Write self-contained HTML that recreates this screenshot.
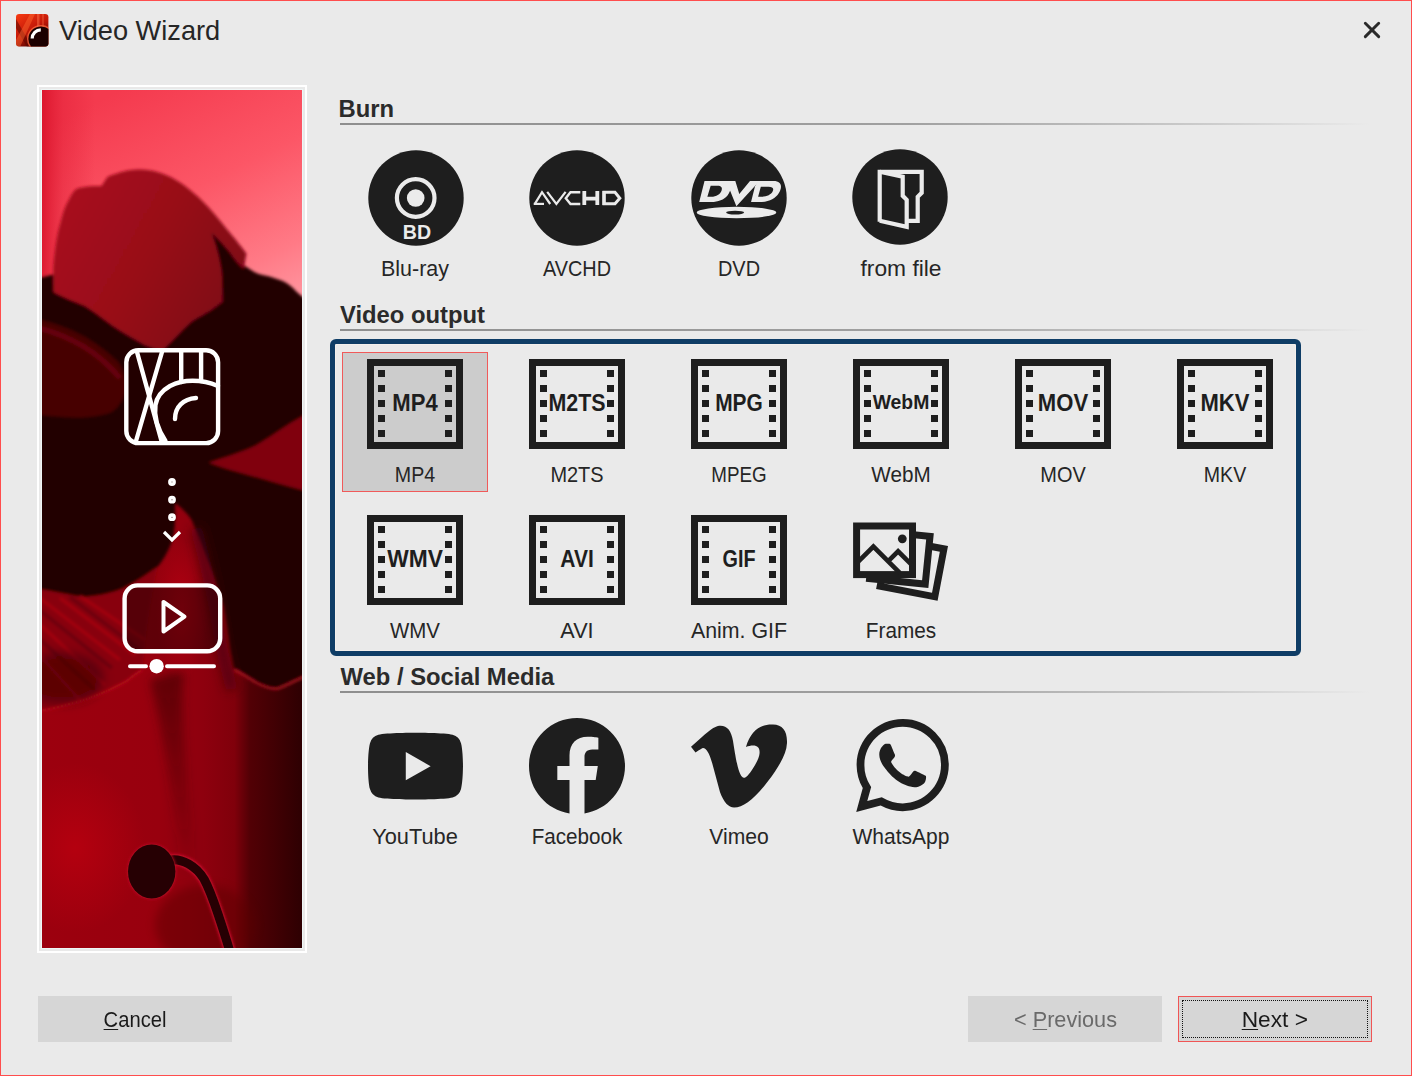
<!DOCTYPE html>
<html><head><meta charset="utf-8">
<style>
*{margin:0;padding:0;box-sizing:border-box}
html,body{width:1412px;height:1076px;overflow:hidden;background:#eaeaea}
body{position:relative;font-family:"Liberation Sans",sans-serif;color:#262626}
.abs{position:absolute}
.win{position:absolute;left:0;top:0;width:1412px;height:1076px;border:1px solid #ff4d4d}
.title{position:absolute;left:59px;top:13.5px;font-size:27.2px;line-height:34px;color:#262626;white-space:nowrap}
.hdr{position:absolute;left:340px;font-weight:bold;font-size:23.8px;line-height:28px;color:#2b2b2b;white-space:nowrap}
.sep{position:absolute;left:340px;width:1030px;height:2px;background:linear-gradient(90deg,#8e8e8e 0%,#a0a0a0 55%,#cdcdcd 85%,#eaeaea 100%)}
.lbl{position:absolute;text-align:center;font-size:22.5px;line-height:26px;color:#262626;white-space:nowrap;transform:translateX(-50%)}
.btn{position:absolute;height:46px;background:#d6d6d6;font-size:22.5px;line-height:46px;text-align:center;color:#1a1a1a;white-space:nowrap}
.u{text-decoration:underline;text-underline-offset:1.5px;text-decoration-thickness:1px}
.bt{display:inline-block;position:relative;top:0.8px}
.ft{font-family:"Liberation Sans",sans-serif;font-weight:bold;fill:#1e1e1e}
</style></head><body>
<div class="win"></div>
<svg class="abs" style="left:16px;top:14px" width="33" height="33" viewBox="0 0 33 33">
<defs><linearGradient id="tg" x1="0" y1="0" x2="0.6" y2="1"><stop offset="0" stop-color="#f83a12"/><stop offset="0.55" stop-color="#c21808"/><stop offset="1" stop-color="#4a0200"/></linearGradient>
<clipPath id="tc"><rect x="0" y="0" width="32.4" height="32.4" rx="3.2"/></clipPath></defs>
<g clip-path="url(#tc)"><rect x="0" y="0" width="33" height="33" fill="url(#tg)"/>
<path d="M0,5 L16,33 L11,33 L0,14Z" fill="#5a0500" opacity="0.55"/>
<path d="M14,0 L19,0 L4,33 L0,33 L0,26Z" fill="#ff6a30" opacity="0.45"/>
<rect x="21" y="0" width="2.5" height="16" fill="#ff7a50" opacity="0.45"/>
<rect x="26" y="0" width="2" height="16" fill="#ff7a50" opacity="0.3"/>
<circle cx="25" cy="25" r="14" fill="#ff6a40" opacity="0.75"/>
<circle cx="25" cy="25" r="12.6" fill="#1c0000"/>
<path d="M16.2,24.5 A8.6,8.6 0 0 1 24.8,15.9" stroke="#fff" stroke-width="3.2" fill="none"/>
</g></svg>
<div class="title">Video Wizard</div>
<svg class="abs" style="left:1362px;top:20px" width="20" height="20" viewBox="0 0 20 20"><path d="M3.3 3.2L16.7 16.6M16.7 3.2L3.3 16.6" stroke="#2a2a2a" stroke-width="2.9" stroke-linecap="round"/></svg>
<div class="abs" style="left:37px;top:85px;width:270px;height:868px;background:#fff"></div>
<div class="abs" style="left:39px;top:87px;width:266px;height:864px;background:#e9e9e9"></div>
<div class="abs" style="left:41px;top:89px;width:262px;height:860px;background:#eef6f6"></div>
<svg class="abs" style="left:42px;top:90px" width="260" height="858" viewBox="42 90 260 858">
<defs>
<linearGradient id="sky" gradientUnits="userSpaceOnUse" x1="120" y1="90" x2="240" y2="330">
<stop offset="0" stop-color="#f43a4e"/><stop offset="0.45" stop-color="#fc5666"/><stop offset="0.8" stop-color="#ff7a86"/><stop offset="1" stop-color="#ff96a0"/>
</linearGradient>
<linearGradient id="skyl" gradientUnits="userSpaceOnUse" x1="42" y1="0" x2="95" y2="0">
<stop offset="0" stop-color="#d81028" stop-opacity="0.85"/><stop offset="0.4" stop-color="#e01c34" stop-opacity="0.4"/><stop offset="1" stop-color="#e01c34" stop-opacity="0"/>
</linearGradient>
<linearGradient id="bot" gradientUnits="userSpaceOnUse" x1="42" y1="0" x2="302" y2="0">
<stop offset="0" stop-color="#9c000e"/><stop offset="0.45" stop-color="#98000e"/><stop offset="0.62" stop-color="#8e000e"/><stop offset="0.74" stop-color="#80000b"/><stop offset="0.8" stop-color="#520005"/><stop offset="1" stop-color="#2e0002"/>
</linearGradient>
<linearGradient id="foldg" gradientUnits="userSpaceOnUse" x1="0" y1="670" x2="0" y2="880">
<stop offset="0" stop-color="#3a0003" stop-opacity="0.6"/><stop offset="1" stop-color="#3a0003" stop-opacity="0"/>
</linearGradient>
<radialGradient id="glow" cx="0.5" cy="0.5" r="0.5">
<stop offset="0" stop-color="#b4000f"/><stop offset="1" stop-color="#b4000f" stop-opacity="0"/>
</radialGradient>
<radialGradient id="cglow" cx="0.5" cy="0.5" r="0.5">
<stop offset="0" stop-color="#bc0012"/><stop offset="1" stop-color="#bc0012" stop-opacity="0"/>
</radialGradient>
<linearGradient id="petg" gradientUnits="userSpaceOnUse" x1="60" y1="200" x2="240" y2="300"><stop offset="0" stop-color="#a80e1e"/><stop offset="0.5" stop-color="#980a18"/><stop offset="1" stop-color="#7e0612"/></linearGradient>
<filter id="bl" x="-10%" y="-10%" width="120%" height="120%"><feGaussianBlur stdDeviation="1.5"/></filter>
<filter id="bl4" x="-50%" y="-20%" width="200%" height="140%"><feGaussianBlur stdDeviation="5"/></filter>
</defs>
<rect x="42" y="90" width="260" height="858" fill="url(#sky)"/>
<rect x="42" y="90" width="60" height="220" fill="url(#skyl)"/>
<rect x="42" y="480" width="260" height="468" fill="url(#bot)"/>
<ellipse cx="75" cy="848" rx="70" ry="85" fill="url(#glow)"/>
<path d="M150,680 C160,720 168,770 176,830 C180,870 184,910 188,948 L204,948 C200,900 194,840 188,790 C184,740 180,700 184,670 Z" fill="url(#foldg)" filter="url(#bl4)"/>
<ellipse cx="205" cy="925" rx="50" ry="40" fill="#5a0006" opacity="0.45" filter="url(#bl4)"/>
<ellipse cx="182" cy="610" rx="26" ry="70" fill="url(#cglow)" opacity="0.8"/>
<g filter="url(#bl)">
<!-- dark big -->
<path d="M32,280 L211.7,233 C222,245 240,266 258.7,274 C272,277 285,280 293,288 C299,295 312,303 312,307 L312,674 C292,682 284,689 277.2,688.9 C268,688 262,686 255.8,682.5 C248,678 240,672 234.4,669.7 C232,660 231,652 230.2,648.3 C228,630 226,618 223.7,605.5 C218,590 214,575 208.8,562.8 C204,550 198,535 191.7,520 C188,514 182,508 175,503 C176,525 174,535 170.3,545.7 C168,550 165,558 157.5,567 C150,572 140,580 123.2,588.4 C115,592 100,596 84.8,597 C75,597 60,592 32,588.4 Z" fill="#240003"/>
<!-- medium red top petal -->
<path d="M53.5,292 L53.2,267.8 C55,245 58,230 60.4,222.9 C63,212 66,204 68.6,200.4 C72,193 75,189 78.8,188.1 C88,186 96,186 101.3,186.1 C103,184 104,182 105.4,180 C107,177 108,176 109.5,175.9 C120,172 128,170 134,169.7 C145,169 150,170 156.5,171.8 C168,175 177,180 185.1,186.1 C195,194 203,201 209.6,208.6 C218,218 224,226 230.1,233.1 C236,240 242,248 246.4,253.5 L240,290 L218,305 C210,312 200,316 191.7,321.4 C182,330 175,338 170.3,342.8 C166,347 163,350 161.7,350.2 C155,349 150,347 144.6,344.9 C133,338 122,332 112.6,325.7 C102,318 92,310 84.8,306 C70,300 60,296 53.5,292 Z" fill="url(#petg)"/>

<!-- dark finger -->
<path d="M211.7,233.1 C216,245 220,258 221.9,274 L222.9,312 L250,300 L262,277 C250,274 244,270 238.2,263.8 C232,256 226,246 211.7,233.1 Z" fill="#240003"/>
<!-- left streaked dark-red petal -->
<path d="M32,318 C70,326 95,340 118,362 C130,378 128,400 112,412 C90,420 65,418 32,414 Z" fill="#4a0007" opacity="0.9"/>
<path d="M32,326 C72,336 98,352 120,378" stroke="#84000f" stroke-width="5" fill="none" opacity="0.55"/>
<!-- right lower red streak -->
<path d="M312,411.2 C285,425 270,438 255.8,445.4 C240,453 222,458 208.8,462.5 C218,466 226,469 234.4,471 C260,478 285,486 312,492.4 Z" fill="#80000e"/>
<!-- left striped lower petal -->
<path d="M32,588.4 C60,592 75,597 84.8,597 C100,596 115,592 123.2,588.4 C140,580 150,572 157.5,567 C150,600 145,640 142.5,669.7 C138,672 133,676 127.5,680.4 C115,688 100,694 84.8,699.6 C72,703 60,708 32,712.4 Z" fill="#88000e"/>
<path d="M32,592 L120,660 M60,598 L135,655 M32,617 L105,685 M80,596 L145,640 M32,647 L80,700" stroke="#b80014" stroke-width="3" fill="none" opacity="0.55"/>
<path d="M32,632 L95,690 M32,604 L112,668 M70,597 L140,650" stroke="#50000a" stroke-width="4" fill="none" opacity="0.45"/>
<path d="M32,712.4 C60,708 72,703 84.8,699.6 C100,694 115,688 127.5,680.4 C133,676 138,672 142.5,669.7" stroke="#d01222" stroke-width="1.8" fill="none" opacity="0.7"/>
<path d="M196,528 C205,560 214,600 220,640 C224,660 228,675 232,690" stroke="#4a0008" stroke-width="12" fill="none" opacity="0.7" filter="url(#bl4)"/>
<ellipse cx="62" cy="678" rx="42" ry="26" fill="#3a0005" opacity="0.55" filter="url(#bl4)"/>
<!-- right dark petal edge highlight -->
<path d="M234.4,669.7 C240,672 248,678 255.8,682.5 C262,686 270,689 277.2,688.9 C287,686 295,680 312,674" stroke="#d01828" stroke-width="2" fill="none" opacity="0.75"/>
</g>
<!-- stamen -->
<path d="M170,860 C182,858 196,866 204,879 C210,890 214,902 218,914 C222,926 226,938 230,952" stroke="#c8102a" stroke-width="11.5" fill="none" filter="url(#bl)"/>
<path d="M170,860 C182,858 196,866 204,879 C210,890 214,902 218,914 C222,926 226,938 230,952" stroke="#260003" stroke-width="9" fill="none"/>
<ellipse cx="151.7" cy="871.5" rx="24.5" ry="27.8" fill="#b80f22" filter="url(#bl)"/>
<ellipse cx="151.7" cy="871.5" rx="23.7" ry="27" fill="#260003"/>
<!-- icons -->
<rect x="124.6" y="585.4" width="95.6" height="65.9" rx="13" fill="#1a0002" opacity="0.45"/>
<g fill="none" stroke="#fff" stroke-width="4.4" stroke-linecap="round" stroke-linejoin="round">
<rect x="126.3" y="350.3" width="91.8" height="92.8" rx="12"/>
<path d="M137,352 L161.5,441"/>
<path d="M162,352 L136,441"/>
<path d="M181.2,352 L181.2,382 M201.1,352 L201.1,381"/>
<path d="M165.5,441 C157,428 154,415 155.5,405 C157,395 163,390 170,386 C178,382 186,380.8 192.5,380.8 C203,380.8 211,383 218,386"/>
<path d="M175,419 C175,407 183,399 196,398"/>
<circle cx="172" cy="482" r="2.2" stroke-width="3.4"/>
<circle cx="172" cy="499.7" r="2.2" stroke-width="3.4"/>
<circle cx="172" cy="517.2" r="2.2" stroke-width="3.4"/>
<path d="M164,532 L172,540 L180,532" stroke-width="3.2" stroke-linecap="butt" stroke-linejoin="miter"/>
<rect x="124.6" y="585.4" width="95.6" height="65.9" rx="13"/>
<path d="M163.5,602 L163.5,631.5 L184.5,616.7 Z" stroke-width="4"/>
<path d="M130,666.2 L146,666.2 M167,666.2 L214,666.2" stroke-width="4"/>
</g>
<circle cx="156.6" cy="666.2" r="7.2" fill="#fff"/>
</svg>
<div class="hdr" style="top:95px;margin-left:-1.5px">Burn</div>
<div class="sep" style="top:123px"></div>
<div class="hdr" style="top:301px;margin-left:0px">Video output</div>
<div class="sep" style="top:329px"></div>
<div class="hdr" style="top:663px;margin-left:0.5px">Web / Social Media</div>
<div class="sep" style="top:691px"></div>
<svg class="abs" style="left:365.5px;top:148px" width="100" height="100" viewBox="365.5 148 100 100"><circle cx="415.5" cy="198" r="47.7" fill="#1e1e1e"/><circle cx="415.2" cy="198" r="18.8" fill="none" stroke="#ebebeb" stroke-width="4.2"/><circle cx="415.2" cy="198" r="8.8" fill="#ebebeb"/><text x="416.4" y="239.3" text-anchor="middle" font-family="Liberation Sans" font-weight="bold" font-size="19.6" fill="#ebebeb">BD</text></svg>
<svg class="abs" style="left:527px;top:148px" width="100" height="100" viewBox="527 148 100 100"><circle cx="577" cy="198" r="47.7" fill="#1e1e1e"/><g fill="none" stroke="#ebebeb" stroke-linejoin="miter">
<path d="M535 203.6 L542 192.2 L550.2 204" stroke-width="2.2"/>
<path d="M533.7 203.9 L544 203.9" stroke-width="2.2"/>
<path d="M547.2 191.9 L556.4 204 L565.6 191.9" stroke-width="2.2"/>
<path d="M580.3 192.3 L570.5 192.3 L565.8 198.2 L570.5 204 L580.3 204" stroke-width="2.4"/>
<path d="M584.3 191 L584.3 205 M597.3 191 L597.3 205 M584.3 198.6 L597.3 198.6" stroke-width="3.8"/>
<path d="M604 192.3 L615 192.3 L619.8 198.2 L615 203.8 L604 203.8 Z" stroke-width="3"/>
<path d="M604 191 L604 205" stroke-width="3.3"/>
</g></svg>
<svg class="abs" style="left:689px;top:148px" width="100" height="100" viewBox="689 148 100 100"><circle cx="739" cy="198" r="47.7" fill="#1e1e1e"/><g transform="translate(690,175) scale(0.07082)" fill="#ebebeb" fill-rule="evenodd">
<path d="M205,85 L500,85 C610,85 585,220 530,290 C480,350 400,382 300,382 L130,382 Z M292,152 L245,308 L300,308 C375,308 425,270 445,222 C462,175 438,152 390,152 Z"/>
<path d="M511,85 L640,85 L696,270 L847,85 L982,85 L655,442 Z"/>
<path d="M960,85 L1180,85 C1300,85 1305,175 1255,255 C1205,335 1120,382 990,382 L862,382 L918,160 Z M1000,165 L962,308 L1000,308 C1080,308 1145,280 1168,230 C1188,185 1165,165 1110,165 Z"/>
</g>
<ellipse cx="736.5" cy="212.5" rx="39.8" ry="5.8" fill="#ebebeb"/>
<ellipse cx="735.1" cy="212.6" rx="9" ry="1.9" fill="#1e1e1e"/></svg>
<svg class="abs" style="left:850.3px;top:147.2px" width="100" height="100" viewBox="850.3 147.2 100 100"><circle cx="900.3" cy="197.2" r="47.7" fill="#1e1e1e"/><g fill="none" stroke="#ebebeb" stroke-width="4.2" stroke-linejoin="miter">
<path d="M880,222 L880,172 L922,172 L922,193 L918,197 L918,221 L907,221"/>
<path d="M880,172 L903,177 L903,196 L907,200 L907,227 L880,221"/>
</g></svg>
<div class="lbl" style="left:415px;top:256px;transform:translateX(-50%) scaleX(0.954)">Blu-ray</div>
<div class="lbl" style="left:577px;top:256px;transform:translateX(-50%) scaleX(0.883)">AVCHD</div>
<div class="lbl" style="left:739px;top:256px;transform:translateX(-50%) scaleX(0.886)">DVD</div>
<div class="lbl" style="left:901px;top:256px;transform:translateX(-50%) scaleX(1.013)">from file</div>
<div class="abs" style="left:330px;top:339px;width:971px;height:317px;border:5px solid #0f3d66;border-radius:6px;box-shadow:inset 0 0 0 1px #f3efec"></div>
<div class="abs" style="left:342px;top:352px;width:146px;height:140px;background:#cccccc;border:1px solid #f05a5a"></div>
<svg class="abs" style="left:367px;top:359px" width="96" height="90" viewBox="0 0 96 90"><rect x="3.5" y="3.5" width="89" height="83" fill="#cccccc" stroke="#1e1e1e" stroke-width="7"/><g fill="#1e1e1e"><rect x="11" y="11" width="7" height="7"/><rect x="78" y="11" width="7" height="7"/><rect x="11" y="26" width="7" height="7"/><rect x="78" y="26" width="7" height="7"/><rect x="11" y="41" width="7" height="7"/><rect x="78" y="41" width="7" height="7"/><rect x="11" y="56" width="7" height="7"/><rect x="78" y="56" width="7" height="7"/><rect x="11" y="71" width="7" height="7"/><rect x="78" y="71" width="7" height="7"/></g><text class="ft" transform="translate(48 52) scale(0.961 1)" x="0" y="0" text-anchor="middle" font-size="23">MP4</text></svg>
<div class="lbl" style="left:415px;top:462px;transform:translateX(-50%) scaleX(0.872)">MP4</div>
<svg class="abs" style="left:529px;top:359px" width="96" height="90" viewBox="0 0 96 90"><rect x="3.5" y="3.5" width="89" height="83" fill="#eaeaea" stroke="#1e1e1e" stroke-width="7"/><g fill="#1e1e1e"><rect x="11" y="11" width="7" height="7"/><rect x="78" y="11" width="7" height="7"/><rect x="11" y="26" width="7" height="7"/><rect x="78" y="26" width="7" height="7"/><rect x="11" y="41" width="7" height="7"/><rect x="78" y="41" width="7" height="7"/><rect x="11" y="56" width="7" height="7"/><rect x="78" y="56" width="7" height="7"/><rect x="11" y="71" width="7" height="7"/><rect x="78" y="71" width="7" height="7"/></g><text class="ft" transform="translate(48 52) scale(0.931 1)" x="0" y="0" text-anchor="middle" font-size="23">M2TS</text></svg>
<div class="lbl" style="left:577px;top:462px;transform:translateX(-50%) scaleX(0.887)">M2TS</div>
<svg class="abs" style="left:691px;top:359px" width="96" height="90" viewBox="0 0 96 90"><rect x="3.5" y="3.5" width="89" height="83" fill="#eaeaea" stroke="#1e1e1e" stroke-width="7"/><g fill="#1e1e1e"><rect x="11" y="11" width="7" height="7"/><rect x="78" y="11" width="7" height="7"/><rect x="11" y="26" width="7" height="7"/><rect x="78" y="26" width="7" height="7"/><rect x="11" y="41" width="7" height="7"/><rect x="78" y="41" width="7" height="7"/><rect x="11" y="56" width="7" height="7"/><rect x="78" y="56" width="7" height="7"/><rect x="11" y="71" width="7" height="7"/><rect x="78" y="71" width="7" height="7"/></g><text class="ft" transform="translate(48 52) scale(0.91 1)" x="0" y="0" text-anchor="middle" font-size="23">MPG</text></svg>
<div class="lbl" style="left:739px;top:462px;transform:translateX(-50%) scaleX(0.835)">MPEG</div>
<svg class="abs" style="left:853px;top:359px" width="96" height="90" viewBox="0 0 96 90"><rect x="3.5" y="3.5" width="89" height="83" fill="#eaeaea" stroke="#1e1e1e" stroke-width="7"/><g fill="#1e1e1e"><rect x="11" y="11" width="7" height="7"/><rect x="78" y="11" width="7" height="7"/><rect x="11" y="26" width="7" height="7"/><rect x="78" y="26" width="7" height="7"/><rect x="11" y="41" width="7" height="7"/><rect x="78" y="41" width="7" height="7"/><rect x="11" y="56" width="7" height="7"/><rect x="78" y="56" width="7" height="7"/><rect x="11" y="71" width="7" height="7"/><rect x="78" y="71" width="7" height="7"/></g><text class="ft" transform="translate(48 50) scale(0.97 1)" x="0" y="0" text-anchor="middle" font-size="20">WebM</text></svg>
<div class="lbl" style="left:901px;top:462px;transform:translateX(-50%) scaleX(0.919)">WebM</div>
<svg class="abs" style="left:1015px;top:359px" width="96" height="90" viewBox="0 0 96 90"><rect x="3.5" y="3.5" width="89" height="83" fill="#eaeaea" stroke="#1e1e1e" stroke-width="7"/><g fill="#1e1e1e"><rect x="11" y="11" width="7" height="7"/><rect x="78" y="11" width="7" height="7"/><rect x="11" y="26" width="7" height="7"/><rect x="78" y="26" width="7" height="7"/><rect x="11" y="41" width="7" height="7"/><rect x="78" y="41" width="7" height="7"/><rect x="11" y="56" width="7" height="7"/><rect x="78" y="56" width="7" height="7"/><rect x="11" y="71" width="7" height="7"/><rect x="78" y="71" width="7" height="7"/></g><text class="ft" transform="translate(48 52) scale(0.96 1)" x="0" y="0" text-anchor="middle" font-size="23">MOV</text></svg>
<div class="lbl" style="left:1063px;top:462px;transform:translateX(-50%) scaleX(0.887)">MOV</div>
<svg class="abs" style="left:1177px;top:359px" width="96" height="90" viewBox="0 0 96 90"><rect x="3.5" y="3.5" width="89" height="83" fill="#eaeaea" stroke="#1e1e1e" stroke-width="7"/><g fill="#1e1e1e"><rect x="11" y="11" width="7" height="7"/><rect x="78" y="11" width="7" height="7"/><rect x="11" y="26" width="7" height="7"/><rect x="78" y="26" width="7" height="7"/><rect x="11" y="41" width="7" height="7"/><rect x="78" y="41" width="7" height="7"/><rect x="11" y="56" width="7" height="7"/><rect x="78" y="56" width="7" height="7"/><rect x="11" y="71" width="7" height="7"/><rect x="78" y="71" width="7" height="7"/></g><text class="ft" transform="translate(48 52) scale(0.959 1)" x="0" y="0" text-anchor="middle" font-size="23">MKV</text></svg>
<div class="lbl" style="left:1225px;top:462px;transform:translateX(-50%) scaleX(0.87)">MKV</div>
<svg class="abs" style="left:367px;top:515px" width="96" height="90" viewBox="0 0 96 90"><rect x="3.5" y="3.5" width="89" height="83" fill="#eaeaea" stroke="#1e1e1e" stroke-width="7"/><g fill="#1e1e1e"><rect x="11" y="11" width="7" height="7"/><rect x="78" y="11" width="7" height="7"/><rect x="11" y="26" width="7" height="7"/><rect x="78" y="26" width="7" height="7"/><rect x="11" y="41" width="7" height="7"/><rect x="78" y="41" width="7" height="7"/><rect x="11" y="56" width="7" height="7"/><rect x="78" y="56" width="7" height="7"/><rect x="11" y="71" width="7" height="7"/><rect x="78" y="71" width="7" height="7"/></g><text class="ft" transform="translate(48 52.3) scale(0.99 1)" x="0" y="0" text-anchor="middle" font-size="23">WMV</text></svg>
<div class="lbl" style="left:415px;top:618px;transform:translateX(-50%) scaleX(0.909)">WMV</div>
<svg class="abs" style="left:529px;top:515px" width="96" height="90" viewBox="0 0 96 90"><rect x="3.5" y="3.5" width="89" height="83" fill="#eaeaea" stroke="#1e1e1e" stroke-width="7"/><g fill="#1e1e1e"><rect x="11" y="11" width="7" height="7"/><rect x="78" y="11" width="7" height="7"/><rect x="11" y="26" width="7" height="7"/><rect x="78" y="26" width="7" height="7"/><rect x="11" y="41" width="7" height="7"/><rect x="78" y="41" width="7" height="7"/><rect x="11" y="56" width="7" height="7"/><rect x="78" y="56" width="7" height="7"/><rect x="11" y="71" width="7" height="7"/><rect x="78" y="71" width="7" height="7"/></g><text class="ft" transform="translate(48 52.3) scale(0.914 1)" x="0" y="0" text-anchor="middle" font-size="23">AVI</text></svg>
<div class="lbl" style="left:577px;top:618px;transform:translateX(-50%) scaleX(0.962)">AVI</div>
<svg class="abs" style="left:691px;top:515px" width="96" height="90" viewBox="0 0 96 90"><rect x="3.5" y="3.5" width="89" height="83" fill="#eaeaea" stroke="#1e1e1e" stroke-width="7"/><g fill="#1e1e1e"><rect x="11" y="11" width="7" height="7"/><rect x="78" y="11" width="7" height="7"/><rect x="11" y="26" width="7" height="7"/><rect x="78" y="26" width="7" height="7"/><rect x="11" y="41" width="7" height="7"/><rect x="78" y="41" width="7" height="7"/><rect x="11" y="56" width="7" height="7"/><rect x="78" y="56" width="7" height="7"/><rect x="11" y="71" width="7" height="7"/><rect x="78" y="71" width="7" height="7"/></g><text class="ft" transform="translate(48 52.3) scale(0.86 1)" x="0" y="0" text-anchor="middle" font-size="23">GIF</text></svg>
<div class="lbl" style="left:739px;top:618px;transform:translateX(-50%) scaleX(0.948)">Anim. GIF</div>
<svg class="abs" style="left:848px;top:515px" width="104" height="95" viewBox="848 515 104 95">
<g transform="rotate(10.8 912.05 567.6)"><rect x="884.25" y="543.25" width="55.6" height="48.7" fill="#eaeaea" stroke="#1e1e1e" stroke-width="7"/></g>
<g transform="rotate(5.7 899.8 557.4)"><rect x="871.8499999999999" y="533.4" width="55.9" height="48" fill="#eaeaea" stroke="#1e1e1e" stroke-width="7"/></g>
<rect x="856.6" y="526" width="55.9" height="48.6" fill="#eaeaea" stroke="#1e1e1e" stroke-width="7"/>
<circle cx="902.3" cy="538.8" r="4.4" fill="#1e1e1e"/>
<path d="M856,563.8 L873.4,546.6 L900,573.2 M887,562.4 L898.1,551.3 L912,565.2" fill="none" stroke="#1e1e1e" stroke-width="4.6"/>
</svg>
<div class="lbl" style="left:901px;top:618px;transform:translateX(-50%) scaleX(0.923)">Frames</div>
<svg class="abs" style="left:368px;top:718px" width="95" height="96" viewBox="0 3.545 24 24.36" preserveAspectRatio="none"><path fill="#1e1e1e" d="M23.498 6.186a3.016 3.016 0 0 0-2.122-2.136C19.505 3.545 12 3.545 12 3.545s-7.505 0-9.377.505A3.017 3.017 0 0 0 .502 6.186C0 8.07 0 12 0 12s0 3.93.502 5.814a3.016 3.016 0 0 0 2.122 2.136c1.871.505 9.376.505 9.376.505s7.505 0 9.377-.505a3.015 3.015 0 0 0 2.122-2.136C24 15.93 24 12 24 12s0-3.93-.502-5.814zM9.545 15.568V8.432L15.818 12l-6.273 3.568z" transform="translate(0,3.77)"/></svg>
<svg class="abs" style="left:529px;top:718px" width="96" height="96" viewBox="0 0 1024 1024"><path fill="#1e1e1e" d="M1024,512C1024,229.23,794.77,0,512,0S0,229.23,0,512c0,255.55,187.23,467.37,432,505.78V660H302V512H432V399.2C432,270.88,508.44,200,625.39,200,681.41,200,740,210,740,210V336H675.44c-63.6,0-83.44,39.47-83.44,79.96V512H734L711.3,660H592v357.78C836.77,979.37,1024,767.55,1024,512Z"/></svg>
<svg class="abs" style="left:691px;top:718px" width="96" height="96" viewBox="0 0 24 24"><path fill="#1e1e1e" d="M23.9765 6.4168c-.105 2.338-1.739 5.5429-4.894 9.6088-3.2679 4.247-6.0258 6.3699-8.2898 6.3699-1.409 0-2.578-1.294-3.553-3.881l-1.9179-7.1138c-.719-2.584-1.488-3.878-2.312-3.878-.179 0-.806.378-1.881 1.132L0 7.2137a315.1 315.1 0 003.501-3.1279C5.08 2.7208 6.266 2.0028 7.055 1.9298c1.867-.18 3.016 1.1 3.447 3.838.465 2.953.789 4.789.971 5.5069.539 2.45 1.131 3.674 1.776 3.674.502 0 1.256-.796 2.265-2.385 1.004-1.589 1.54-2.797 1.612-3.628.144-1.371-.395-2.061-1.614-2.061-.574 0-1.167.121-1.777.391 1.186-3.868 3.434-5.757 6.762-5.637 2.473.06 3.628 1.664 3.493 4.797l-.0013.0019z"/></svg>
<svg class="abs" style="left:856px;top:719px" width="93" height="93" viewBox="0 0 24 24"><path fill="#1e1e1e" d="M17.472 14.382c-.297-.149-1.758-.867-2.03-.967-.273-.099-.471-.148-.67.15-.197.297-.767.966-.94 1.164-.173.199-.347.223-.644.075-.297-.15-1.255-.463-2.39-1.475-.883-.788-1.48-1.761-1.653-2.059-.173-.297-.018-.458.13-.606.134-.133.298-.347.446-.52.149-.174.198-.298.298-.497.099-.198.05-.371-.025-.52-.075-.149-.669-1.612-.916-2.207-.242-.579-.487-.5-.669-.51-.173-.008-.371-.01-.57-.01-.198 0-.52.074-.792.372-.272.297-1.040 1.016-1.040 2.479 0 1.462 1.065 2.875 1.213 3.074.149.198 2.096 3.2 5.077 4.487.709.306 1.262.489 1.694.625.712.227 1.36.195 1.871.118.571-.085 1.758-.719 2.006-1.413.248-.694.248-1.289.173-1.413-.074-.124-.272-.198-.57-.347m-5.421 7.403h-.004a9.87 9.87 0 01-5.031-1.378l-.361-.214-3.741.982.998-3.648-.235-.374a9.86 9.86 0 01-1.51-5.26c.001-5.45 4.436-9.884 9.888-9.884 2.64 0 5.122 1.03 6.988 2.898a9.825 9.825 0 012.893 6.994c-.003 5.450-4.437 9.884-9.885 9.884m8.413-18.297A11.815 11.815 0 0012.05 0C5.495 0 .16 5.335.157 11.892c0 2.096.547 4.142 1.588 5.945L.057 24l6.305-1.654a11.882 11.882 0 005.683 1.448h.005c6.554 0 11.890-5.335 11.893-11.893a11.821 11.821 0 00-3.480-8.413Z"/></svg>
<div class="lbl" style="left:415px;top:824px;transform:translateX(-50%) scaleX(0.969)">YouTube</div>
<div class="lbl" style="left:577px;top:824px;transform:translateX(-50%) scaleX(0.918)">Facebook</div>
<div class="lbl" style="left:739px;top:824px;transform:translateX(-50%) scaleX(0.938)">Vimeo</div>
<div class="lbl" style="left:901px;top:824px;transform:translateX(-50%) scaleX(0.934)">WhatsApp</div>
<div class="btn" style="left:38px;top:996px;width:194px"><span class="bt" style="transform:scaleX(0.897)"><span class="u">C</span>ancel</span></div>
<div class="btn" style="left:968px;top:996px;width:194px;color:#6a6a6a"><span class="bt" style="transform:scaleX(0.963)">&lt; <span class="u">P</span>revious</span></div>
<div class="btn" style="left:1178px;top:996px;width:194px;border:1px solid #f05555;line-height:44px"><div class="abs" style="left:3px;top:3px;right:3px;bottom:3px;border:1px dotted #111"></div><span class="bt" style="transform:scaleX(1.009)"><span class="u">N</span>ext &gt;</span></div>
</body></html>
